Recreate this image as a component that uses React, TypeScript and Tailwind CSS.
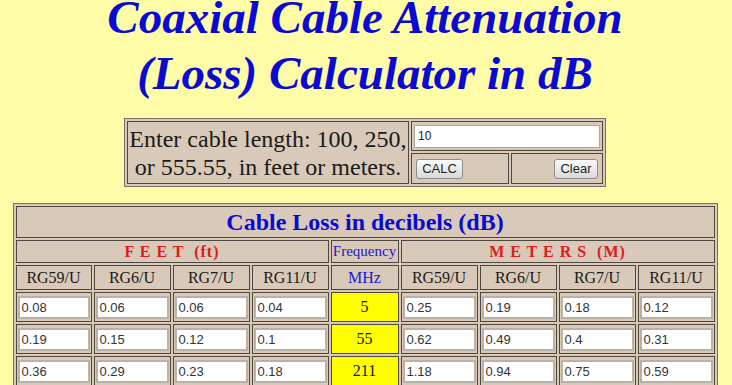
import React from "react";

const serif = { fontFamily: '"Liberation Serif", "Times New Roman", serif' };
const sans = { fontFamily: '"Liberation Sans", Arial, sans-serif' };

const rows = [
  { feet: ["0.08", "0.06", "0.06", "0.04"], f: "5", m: ["0.25", "0.19", "0.18", "0.12"] },
  { feet: ["0.19", "0.15", "0.12", "0.1"], f: "55", m: ["0.62", "0.49", "0.4", "0.31"] },
  { feet: ["0.36", "0.29", "0.23", "0.18"], f: "211", m: ["1.18", "0.94", "0.75", "0.59"] },
];

const cell = "border border-[#4f4842] bg-[#d9c9b9]";

function ValCell({ v }: { v: string }) {
  return (
    <div className={`${cell} flex items-center px-[1px]`}>
      <div
        className="h-[23px] w-full border-2 border-[#bdb1a5] bg-white pl-[2px] text-[13px] leading-[19px] text-[#333]"
        style={sans}
      >
        {v}
      </div>
    </div>
  );
}

function Btn({ label, w }: { label: string; w: string }) {
  return (
    <div
      className={`${w} flex h-[20px] items-center justify-center rounded-[3px] border border-[#8c8c8c] bg-gradient-to-b from-[#fbfbfb] to-[#d9d9d9] text-[13px] text-[#1e1e1e]`}
      style={sans}
    >
      {label}
    </div>
  );
}

export default function App() {
  const heads = ["RG59/U", "RG6/U", "RG7/U", "RG11/U"];
  return (
    <div className="min-h-screen overflow-hidden bg-[#fffca8]" style={serif}>
      <div className="w-[730px]">
        <h1 className="-mt-[11px] text-center text-[47px] font-bold italic leading-[56px] text-[#0a0ad2]">
          Coaxial Cable Attenuation
          <br />
          (Loss) Calculator in dB
        </h1>

        <div className="mx-auto mt-[17px] grid w-[482px] grid-cols-[282px_98px_92px] grid-rows-[30px_31px] gap-[2px] border border-[#76706a] bg-[#d9c9b9] p-[2px]">
          <div className={`${cell} row-span-2 flex flex-col items-center justify-center text-[24px] leading-[28px] text-[#1a1a1a]`}>
            <div>Enter cable length: 100, 250,</div>
            <div>or 555.55, in feet or meters.</div>
          </div>
          <div className={`${cell} col-span-2 flex items-center px-[2px]`}>
            <div
              className="h-[23px] w-full border border-[#a7a7a7] bg-white pl-[3px] text-[12px] leading-[21px] text-[#222]"
              style={sans}
            >
              10
            </div>
          </div>
          <div className={`${cell} flex items-center pl-[4px]`}>
            <Btn label="CALC" w="w-[47px]" />
          </div>
          <div className={`${cell} flex items-center justify-end pr-[4px]`}>
            <Btn label="Clear" w="w-[44px]" />
          </div>
        </div>

        <div className="mx-auto mt-[16px] grid w-[705px] grid-cols-[76px_77px_77px_77px_68px_77px_77px_77px_77px] grid-rows-[32px_23px_25px_30px_30px_30px] gap-[2px] border border-[#76706a] bg-[#d9c9b9] p-[2px]">
          <div className={`${cell} col-span-9 flex items-center justify-center text-[24px] font-bold text-[#0a0ad2]`}>
            Cable Loss in decibels (dB)
          </div>
          <div className={`${cell} col-span-4 flex items-center justify-center whitespace-pre text-[16px] font-bold tracking-[1px] text-[#e01b1b]`}>
            {"F E E T  (ft)"}
          </div>
          <div className={`${cell} flex items-center justify-center text-[15px] text-[#1a1ad0]`}>Frequency</div>
          <div className={`${cell} col-span-4 flex items-center justify-center whitespace-pre text-[16px] font-bold tracking-[1px] text-[#e01b1b]`}>
            {"M E T E R S  (M)"}
          </div>
          {heads.map((h) => (
            <div key={"f" + h} className={`${cell} flex items-center justify-center text-[16px] text-[#1a1a1a]`}>
              {h}
            </div>
          ))}
          <div className={`${cell} flex items-center justify-center text-[16px] text-[#1a1ad0]`}>MHz</div>
          {heads.map((h) => (
            <div key={"m" + h} className={`${cell} flex items-center justify-center text-[16px] text-[#1a1a1a]`}>
              {h}
            </div>
          ))}
          {rows.map((r) => (
            <React.Fragment key={r.f}>
              {r.feet.map((v, i) => (
                <ValCell key={"a" + i} v={v} />
              ))}
              <div className="flex items-center justify-center border border-[#4f4842] bg-[#ffff00] text-[16px] text-[#1a1a1a]">
                {r.f}
              </div>
              {r.m.map((v, i) => (
                <ValCell key={"b" + i} v={v} />
              ))}
            </React.Fragment>
          ))}
        </div>
      </div>
    </div>
  );
}
